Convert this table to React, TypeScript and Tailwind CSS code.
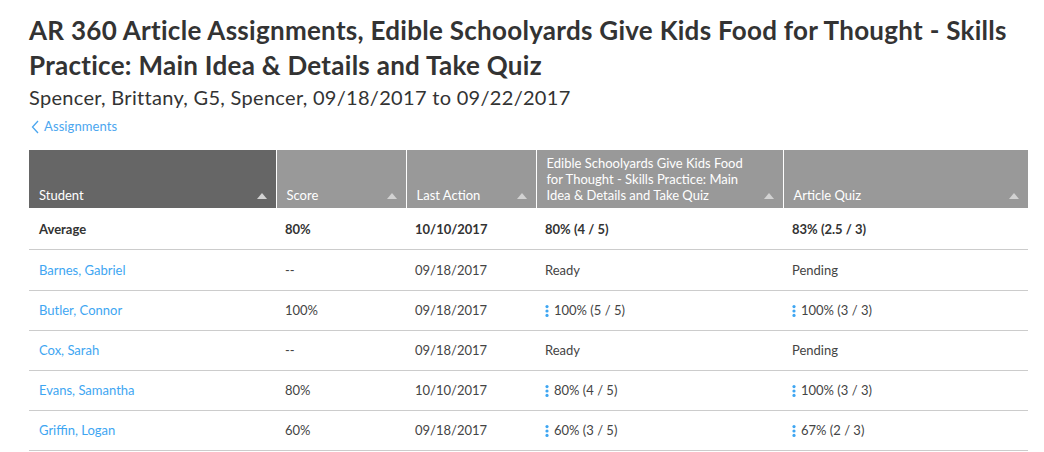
import React from "react";

const Tri = () => (
  <svg width="10" height="6" viewBox="0 0 10 6" className="shrink-0">
    <path d="M0 6 L5 0 L10 6 Z" fill="#d2d2d2" />
  </svg>
);

const Kebab = () => (
  <svg width="4" height="12" viewBox="0 0 4 12" className="mr-[5px] shrink-0">
    <circle cx="2" cy="1.6" r="1.6" fill="#3ea6f2" />
    <circle cx="2" cy="6" r="1.6" fill="#3ea6f2" />
    <circle cx="2" cy="10.4" r="1.6" fill="#3ea6f2" />
  </svg>
);

type Row = { name: string; score: string; last: string; a: string; q: string; ka: boolean; kq: boolean };

const rows: Row[] = [
  { name: "Barnes, Gabriel", score: "--", last: "09/18/2017", a: "Ready", q: "Pending", ka: false, kq: false },
  { name: "Butler, Connor", score: "100%", last: "09/18/2017", a: "100% (5 / 5)", q: "100% (3 / 3)", ka: true, kq: true },
  { name: "Cox, Sarah", score: "--", last: "09/18/2017", a: "Ready", q: "Pending", ka: false, kq: false },
  { name: "Evans, Samantha", score: "80%", last: "10/10/2017", a: "80% (4 / 5)", q: "100% (3 / 3)", ka: true, kq: true },
  { name: "Griffin, Logan", score: "60%", last: "09/18/2017", a: "60% (3 / 5)", q: "67% (2 / 3)", ka: true, kq: true },
];

const font = { fontFamily: '"Source Sans Pro", Lato, "Liberation Sans", sans-serif' };

export default function App() {
  return (
    <div className="w-[1044px] h-[452px] bg-white text-[#333333] px-[29px] pt-[13px]" style={font}>
      <h1 className="text-[26px] leading-[35px] font-bold text-[#333333] tracking-[0.28px]">
        AR 360 Article Assignments, Edible Schoolyards Give Kids Food for Thought - Skills Practice: Main Idea &amp; Details and Take Quiz
      </h1>
      <div className="text-[20px] leading-[26px] mt-[1px] tracking-[0.3px]">Spencer, Brittany, G5, Spencer, 09/18/2017 to 09/22/2017</div>
      <div className="flex items-center h-[16px] mt-[9px] text-[13px] text-[#4ba6ef] tracking-[0.1px]">
        <svg width="8" height="14" viewBox="0 0 8 14" className="mr-[5px] ml-[2px]">
          <path d="M7 1 L1.5 7 L7 13" stroke="#4ba6ef" strokeWidth="1.3" fill="none" />
        </svg>
        Assignments
      </div>
      <table className="mt-[15px] w-[999px] border-collapse table-fixed text-[13px]">
        <colgroup>
          <col className="w-[247px]" />
          <col className="w-[130px]" />
          <col className="w-[130px]" />
          <col className="w-[247px]" />
          <col className="w-[245px]" />
        </colgroup>
        <thead>
          <tr className="h-[58px] text-white">
            {[
              { t: "Student", dark: true },
              { t: "Score" },
              { t: "Last Action" },
              { t: "Edible Schoolyards Give Kids Food for Thought - Skills Practice: Main Idea & Details and Take Quiz" },
              { t: "Article Quiz" },
            ].map((h, i) => (
              <th
                key={i}
                className={`p-0 align-bottom font-normal text-left ${h.dark ? "bg-[#666666]" : "bg-[#999999]"} ${i < 4 ? "border-r border-white" : ""}`}
              >
                <div className="flex items-end justify-between pl-[10px] pr-[9px] pb-[5px]">
                  <span className="leading-[16px] pr-[18px]">{h.t}</span>
                  <span className="mb-[4px]"><Tri /></span>
                </div>
              </th>
            ))}
          </tr>
        </thead>
        <tbody>
          <tr className="h-[41px] border-b border-[#cccccc] font-bold">
            <td className="pl-[10px] pt-[2px]">Average</td>
            <td className="pl-[9px] pt-[2px]">80%</td>
            <td className="pl-[9px] pt-[2px]">10/10/2017</td>
            <td className="pl-[9px] pt-[2px]">80% (4 / 5)</td>
            <td className="pl-[9px] pt-[2px]">83% (2.5 / 3)</td>
          </tr>
          {rows.map((r, idx) => (
            <tr key={r.name} className={`${idx === 0 ? "h-[41px]" : "h-[40px]"} border-b border-[#cccccc] text-[#444444]`}>
              <td className="pl-[10px] pt-[2px] text-[#3ea6f2]">{r.name}</td>
              <td className="pl-[9px] pt-[2px]">{r.score}</td>
              <td className="pl-[9px] pt-[2px]">{r.last}</td>
              <td className="pl-[9px] pt-[2px]">
                <div className="flex items-center">{r.ka && <Kebab />}{r.a}</div>
              </td>
              <td className="pl-[9px] pt-[2px]">
                <div className="flex items-center">{r.kq && <Kebab />}{r.q}</div>
              </td>
            </tr>
          ))}
        </tbody>
      </table>
    </div>
  );
}
